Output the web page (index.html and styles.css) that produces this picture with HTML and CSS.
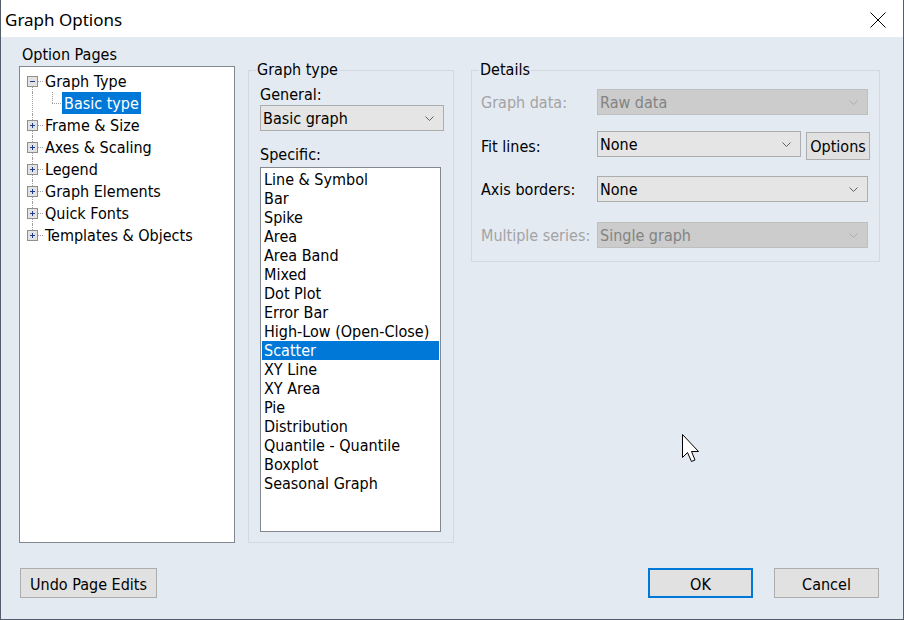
FILE: index.html
```html
<!DOCTYPE html>
<html>
<head>
<meta charset="utf-8">
<link rel="stylesheet" href="styles.css">
</head>
<body>
<div class="window">
  <div class="titlebar">
    <span class="title">Graph Options</span>
    <svg class="close" width="16" height="16" viewBox="0 0 16 16"><path d="M0.5 0.5 L15.5 15.5 M15.5 0.5 L0.5 15.5" stroke="#000" stroke-width="1" fill="none"/></svg>
  </div>
  <div class="content">
    <div class="main">
      <div class="pages">
        <div class="pages-label">Option Pages</div>
        <div class="tree">
          <div class="node">
            <span class="gutter"><span class="seg none"></span><svg class="exp" width="11" height="11" viewBox="0 0 11 11"><rect x="0.5" y="0.5" width="10" height="10" fill="#e3e3e3" stroke="#8f8f8f"/><path d="M3 5.5 H8" stroke="#1f3a8a"/></svg><span class="seg"></span></span>
            <span class="tick"></span><span class="label">Graph Type</span>
          </div>
          <div class="node child">
            <span class="gutter"><span class="seg full"></span></span>
            <span class="branch"><span class="bvert"></span><span class="bhor"></span></span>
            <span class="label selected">Basic type</span>
          </div>
          <div class="node">
            <span class="gutter"><span class="seg"></span><svg class="exp" width="11" height="11" viewBox="0 0 11 11"><rect x="0.5" y="0.5" width="10" height="10" fill="#e3e3e3" stroke="#8f8f8f"/><path d="M3 5.5 H8 M5.5 3 V8" stroke="#1f3a8a"/></svg><span class="seg"></span></span>
            <span class="tick"></span><span class="label">Frame &amp; Size</span>
          </div>
          <div class="node">
            <span class="gutter"><span class="seg"></span><svg class="exp" width="11" height="11" viewBox="0 0 11 11"><rect x="0.5" y="0.5" width="10" height="10" fill="#e3e3e3" stroke="#8f8f8f"/><path d="M3 5.5 H8 M5.5 3 V8" stroke="#1f3a8a"/></svg><span class="seg"></span></span>
            <span class="tick"></span><span class="label">Axes &amp; Scaling</span>
          </div>
          <div class="node">
            <span class="gutter"><span class="seg"></span><svg class="exp" width="11" height="11" viewBox="0 0 11 11"><rect x="0.5" y="0.5" width="10" height="10" fill="#e3e3e3" stroke="#8f8f8f"/><path d="M3 5.5 H8 M5.5 3 V8" stroke="#1f3a8a"/></svg><span class="seg"></span></span>
            <span class="tick"></span><span class="label">Legend</span>
          </div>
          <div class="node">
            <span class="gutter"><span class="seg"></span><svg class="exp" width="11" height="11" viewBox="0 0 11 11"><rect x="0.5" y="0.5" width="10" height="10" fill="#e3e3e3" stroke="#8f8f8f"/><path d="M3 5.5 H8 M5.5 3 V8" stroke="#1f3a8a"/></svg><span class="seg"></span></span>
            <span class="tick"></span><span class="label">Graph Elements</span>
          </div>
          <div class="node">
            <span class="gutter"><span class="seg"></span><svg class="exp" width="11" height="11" viewBox="0 0 11 11"><rect x="0.5" y="0.5" width="10" height="10" fill="#e3e3e3" stroke="#8f8f8f"/><path d="M3 5.5 H8 M5.5 3 V8" stroke="#1f3a8a"/></svg><span class="seg"></span></span>
            <span class="tick"></span><span class="label">Quick Fonts</span>
          </div>
          <div class="node">
            <span class="gutter"><span class="seg"></span><svg class="exp" width="11" height="11" viewBox="0 0 11 11"><rect x="0.5" y="0.5" width="10" height="10" fill="#e3e3e3" stroke="#8f8f8f"/><path d="M3 5.5 H8 M5.5 3 V8" stroke="#1f3a8a"/></svg><span class="seg none"></span></span>
            <span class="tick"></span><span class="label">Templates &amp; Objects</span>
          </div>
        </div>
      </div>

      <fieldset class="group gtype">
        <legend>Graph type</legend>
        <div class="group-body">
          <div class="field-label">General:</div>
          <div class="combo wide">
            <span class="combo-text">Basic graph</span>
            <svg class="chev" width="9" height="5" viewBox="0 0 9 5"><path d="M0.5 0.5 L4.5 4.5 L8.5 0.5" stroke="#606060" fill="none"/></svg>
          </div>
          <div class="field-label spec">Specific:</div>
          <div class="listbox">
            <div class="item">Line &amp; Symbol</div>
            <div class="item">Bar</div>
            <div class="item">Spike</div>
            <div class="item">Area</div>
            <div class="item">Area Band</div>
            <div class="item">Mixed</div>
            <div class="item">Dot Plot</div>
            <div class="item">Error Bar</div>
            <div class="item">High-Low (Open-Close)</div>
            <div class="item selected">Scatter</div>
            <div class="item">XY Line</div>
            <div class="item">XY Area</div>
            <div class="item">Pie</div>
            <div class="item">Distribution</div>
            <div class="item">Quantile - Quantile</div>
            <div class="item">Boxplot</div>
            <div class="item">Seasonal Graph</div>
          </div>
        </div>
      </fieldset>

      <fieldset class="group details">
        <legend>Details</legend>
        <div class="group-body">
          <div class="row r1 disabled">
            <span class="row-label">Graph data:</span>
            <div class="combo full">
              <span class="combo-text">Raw data</span>
              <svg class="chev" width="9" height="5" viewBox="0 0 9 5"><path d="M0.5 0.5 L4.5 4.5 L8.5 0.5" stroke="#adadad" fill="none"/></svg>
            </div>
          </div>
          <div class="row r2">
            <span class="row-label">Fit lines:</span>
            <div class="combo short">
              <span class="combo-text">None</span>
              <svg class="chev" width="9" height="5" viewBox="0 0 9 5"><path d="M0.5 0.5 L4.5 4.5 L8.5 0.5" stroke="#606060" fill="none"/></svg>
            </div>
            <button class="btn options">Options</button>
          </div>
          <div class="row r3">
            <span class="row-label">Axis borders:</span>
            <div class="combo full">
              <span class="combo-text">None</span>
              <svg class="chev" width="9" height="5" viewBox="0 0 9 5"><path d="M0.5 0.5 L4.5 4.5 L8.5 0.5" stroke="#606060" fill="none"/></svg>
            </div>
          </div>
          <div class="row r4 disabled">
            <span class="row-label">Multiple series:</span>
            <div class="combo full">
              <span class="combo-text">Single graph</span>
              <svg class="chev" width="9" height="5" viewBox="0 0 9 5"><path d="M0.5 0.5 L4.5 4.5 L8.5 0.5" stroke="#adadad" fill="none"/></svg>
            </div>
          </div>
        </div>
      </fieldset>
    </div>

    <div class="footer">
      <button class="btn undo">Undo Page Edits</button>
      <div class="footer-right">
        <button class="btn dlg default">OK</button>
        <button class="btn dlg">Cancel</button>
      </div>
    </div>
  </div>
  <svg class="cursor" width="20" height="30" viewBox="0 0 20 30"><path d="M0.5 0.5 V23.5 L5.5 18.5 L9.5 27.5 L13 26 L9.5 17.5 L16.5 17.5 Z" fill="#fff" stroke="#000" stroke-width="1" stroke-linejoin="miter"/></svg>
</div>
</body>
</html>
```

FILE: styles.css
```css
* { box-sizing: border-box; }

html, body {
  margin: 0;
  padding: 0;
  background: #e4eaf2;
}

body {
  font-family: "DejaVu Sans Condensed", "DejaVu Sans", sans-serif;
  font-stretch: condensed;
  font-size: 16px;
  color: #000;
}

.window {
  position: relative;
  width: 904px;
  height: 620px;
  border: 1px solid #535d6b;
  border-top: none;
  background: #e4eaf2;
  display: flex;
  flex-direction: column;
}

.titlebar {
  height: 37px;
  background: #fff;
  display: flex;
  align-items: center;
  justify-content: space-between;
  padding: 0 17px 0 4px;
  flex: none;
}

.title {
  font-family: "Noto Sans", "Open Sans", sans-serif;
  font-stretch: normal;
  font-size: 17px;
  line-height: 20px;
  padding-top: 2px;
}

.close {
  display: block;
  margin-top: 2px;
}

.content {
  flex: 1;
  padding: 7px 23px 0 18px;
  display: flex;
  flex-direction: column;
}

.main {
  display: flex;
  align-items: flex-start;
}

/* Option pages tree */
.pages {
  width: 216px;
  flex: none;
}

.pages-label {
  line-height: 20px;
  height: 22px;
  padding: 1px 0 0 3px;
}

.tree {
  height: 477px;
  background: #fff;
  border: 1px solid #828790;
  padding: 3px 0 0 7px;
}

.node {
  height: 22px;
  display: flex;
  align-items: center;
}

.gutter {
  width: 11px;
  height: 22px;
  display: flex;
  flex-direction: column;
  align-items: center;
  flex: none;
}

.seg {
  flex: 1;
  width: 0;
  border-left: 1px dotted #a0a0a0;
}

.seg.none {
  border-left-color: transparent;
}

.exp {
  display: block;
  flex: none;
}

.tick {
  width: 5px;
  height: 0;
  border-top: 1px dotted #a0a0a0;
  flex: none;
}

.label {
  line-height: 21px;
  height: 22px;
  padding: 1px 2px 0;
  white-space: nowrap;
}

.label.selected {
  background: #0078d7;
  color: #fff;
}

.branch {
  width: 24px;
  height: 22px;
  flex: none;
  display: flex;
  flex-direction: column;
  padding-left: 14px;
}

.bvert {
  height: 11px;
  width: 0;
  border-left: 1px dotted #a0a0a0;
}

.bhor {
  width: 9px;
  height: 0;
  border-top: 1px dotted #a0a0a0;
}

/* group boxes */
.group {
  margin: 16px 0 0 0;
  border: 1px solid #d3d9e0;
  padding: 0;
  min-width: 0;
}

.group legend {
  padding: 0 1px;
  margin-left: 7px;
  line-height: 20px;
}

.gtype {
  width: 206px;
  margin-left: 13px;
  height: 483px;
}

.gtype .group-body {
  padding: 4px 0 10px 11px;
}

.field-label {
  line-height: 20px;
  height: 21px;
  padding-top: 1px;
}

.field-label.spec {
  margin-top: 13px;
  height: 23px;
}

.combo {
  height: 26px;
  background: #e5e5e5;
  border: 1px solid #adadad;
  display: flex;
  align-items: center;
  justify-content: space-between;
  padding: 0 9px 0 2px;
}

.combo-text {
  line-height: 20px;
  margin-top: 1px;
}

.combo.wide { width: 184px; }
.combo.full { width: 271px; }
.combo.short { width: 204px; }

.chev { display: block; }

.listbox {
  width: 181px;
  height: 365px;
  background: #fff;
  border: 1px solid #828790;
  padding: 2px 1px;
}

.item {
  height: 19px;
  line-height: 18px;
  padding: 1px 0 0 2px;
  white-space: nowrap;
}

.item.selected {
  background: #0078d7;
  color: #fff;
}

.details {
  width: 409px;
  margin-left: 17px;
}

.details .group-body {
  padding: 9px 0 13px 9px;
}

.row {
  display: flex;
  align-items: center;
}

.r2 { margin-top: 16px; align-items: flex-start; }
.r3 { margin-top: 16px; }
.r4 { margin-top: 20px; }

.row-label {
  width: 116px;
  flex: none;
  line-height: 20px;
  padding-top: 2px;
  white-space: nowrap;
}

.r2 .row-label { margin-top: 5px; padding-top: 1px; }

.disabled .row-label { color: #a3a3a3; }
.disabled .combo {
  background: #cccccc;
  border-color: #bfbfbf;
}
.disabled .combo-text { color: #838383; }

.btn {
  font-family: inherit;
  font-stretch: condensed;
  font-size: 16px;
  color: #000;
  background: #e1e1e1;
  border: 1px solid #adadad;
  padding: 0;
  margin: 0;
  line-height: 20px;
}

.options {
  width: 64px;
  height: 28px;
  margin: 1px 0 0 5px;
  padding-top: 2px;
}

.footer {
  margin-top: 25px;
  display: flex;
  justify-content: space-between;
  align-items: center;
}

.undo {
  width: 137px;
  height: 30px;
  margin-left: 1px;
  padding-top: 3px;
}

.footer-right {
  display: flex;
  gap: 21px;
  margin-right: 1px;
}

.dlg {
  width: 105px;
  height: 30px;
  padding-top: 3px;
}

.dlg.default {
  border: 2px solid #0078d7;
}

.cursor {
  position: absolute;
  left: 681px;
  top: 434px;
}
```
